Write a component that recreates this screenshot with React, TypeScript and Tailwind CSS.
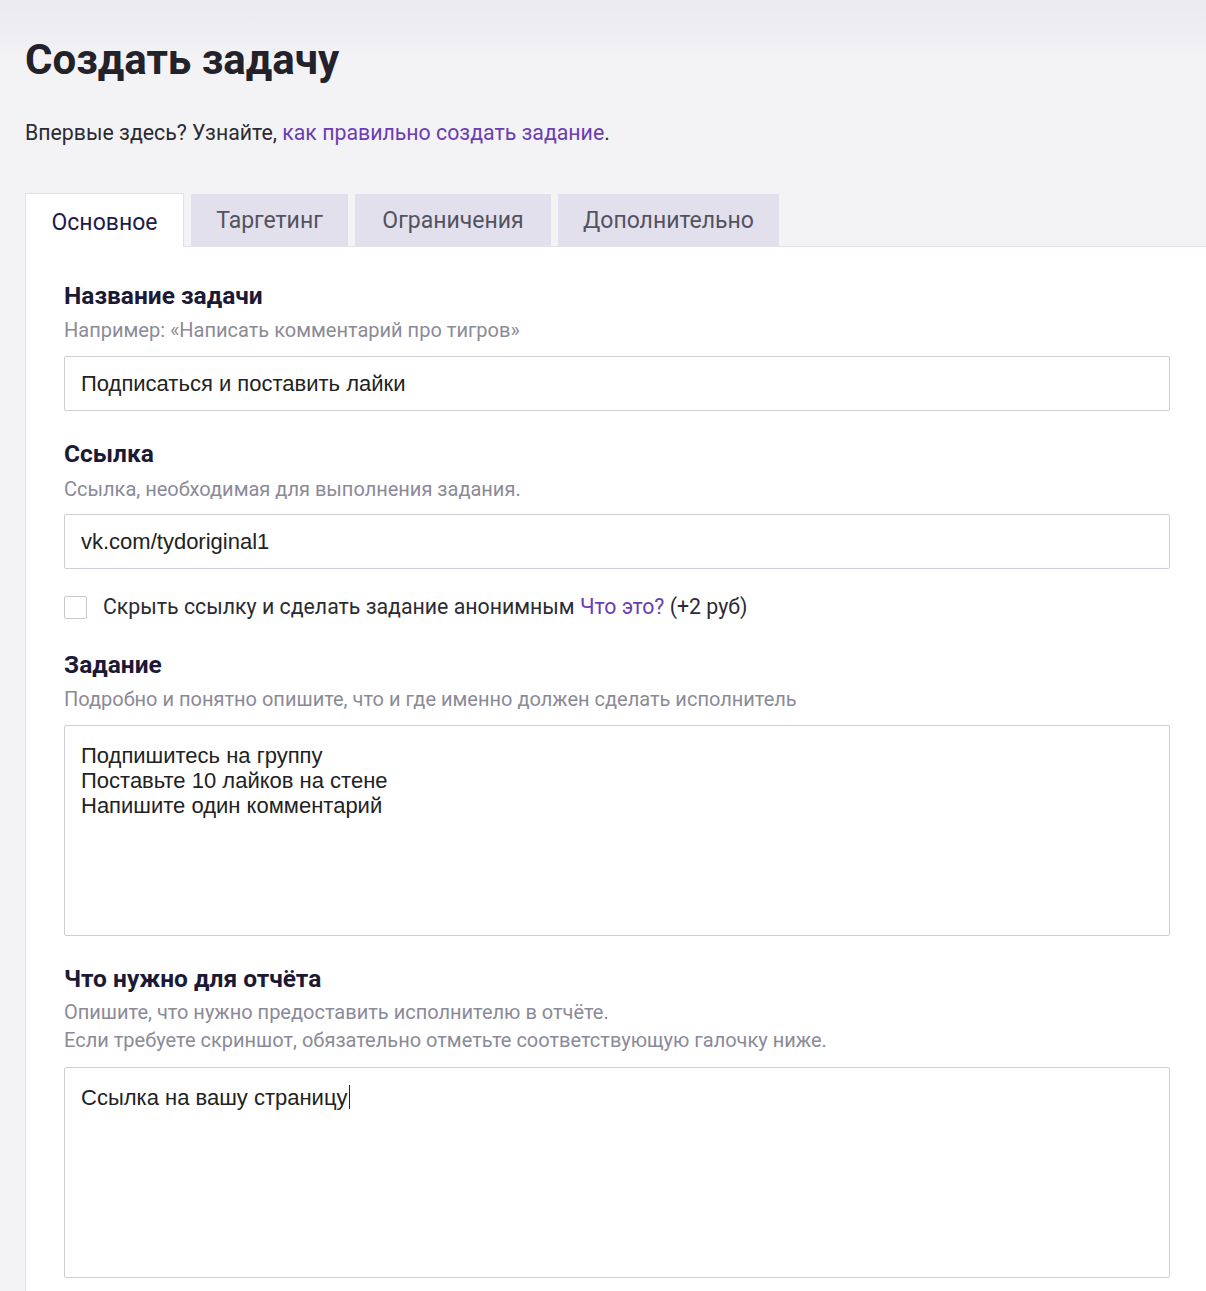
const ui = { fontFamily: 'Roboto, "Noto Sans", sans-serif' };
const val = { fontFamily: '"Liberation Sans", Arial, sans-serif' };

const tabs = [
  { title: 'Основное', w: 'w-[159px]' },
  { title: 'Таргетинг', w: 'w-[157px]' },
  { title: 'Ограничения', w: 'w-[196px]' },
  { title: 'Дополнительно', w: 'w-[221px]' },
];

function Label({ children, className = '' }: { children: React.ReactNode; className?: string }) {
  return (
    <div className={`text-[24.5px] leading-[30px] font-bold text-[#1b1a36] ${className}`}>
      {children}
    </div>
  );
}

function Hint({ children, className = '' }: { children: React.ReactNode; className?: string }) {
  return <div className={`text-[20px] leading-[28px] text-[#8b8a98] ${className}`}>{children}</div>;
}

export default function App() {
  return (
    <div
      style={ui}
      className="min-h-[1291px] w-full overflow-hidden bg-gradient-to-b from-[#e9e9ee] via-[#f3f3f6] via-[60px] to-[#f3f3f6] pl-[25px]"
    >
      <h1 className="pt-[35px] text-[42px] leading-[50px] font-bold text-[#23222a]">Создать задачу</h1>
      <p className="mt-[33px] text-[21.3px] leading-[30px] text-[#2c2b33]">
        Впервые здесь? Узнайте,{' '}
        <a href="#" className="text-[#6b3cb3]">
          как правильно создать задание
        </a>
        .
      </p>

      <div className="mt-[45px] flex items-end gap-[7px]">
        {tabs.map((t, i) =>
          i === 0 ? (
            <div
              key={t.title}
              className={`relative z-10 -mb-px flex h-[54px] items-center justify-center border border-b-0 border-[#e1e0ea] bg-white pt-[5px] text-[23px] text-[#1e1b48] ${t.w}`}
            >
              {t.title}
            </div>
          ) : (
            <div
              key={t.title}
              className={`flex h-[52px] items-center justify-center bg-[#e2e0ed] pt-[3px] text-[23px] text-[#54525e] ${t.w}`}
            >
              {t.title}
            </div>
          )
        )}
      </div>

      <div className="min-h-[1044px] border-t border-l border-[#e1e0ea] bg-white pt-[34px] pr-[36px] pb-[20px] pl-[38px]">
        <Label>Название задачи</Label>
        <Hint className="mt-[5px]">Например: «Написать комментарий про тигров»</Hint>
        <input
          readOnly
          value="Подписаться и поставить лайки"
          style={val}
          className="mt-[12px] block h-[55px] w-full rounded-[2px] border border-[#cfced6] px-[16px] text-[22px] text-[#222] outline-none"
        />

        <Label className="mt-[28px]">Ссылка</Label>
        <Hint className="mt-[6px]">Ссылка, необходимая для выполнения задания.</Hint>
        <input
          readOnly
          value="vk.com/tydoriginal1"
          style={val}
          className="mt-[11px] block h-[55px] w-full rounded-[2px] border border-[#cfced6] px-[16px] text-[22px] text-[#222] outline-none"
        />

        <label className="mt-[24px] flex h-[28px] items-center gap-[16px] text-[21.3px] text-[#2c2b33]">
          <span className="block h-[23px] w-[23px] rounded-[2px] border border-[#c9c8d0] bg-white" />
          <span>
            Скрыть ссылку и сделать задание анонимным{' '}
            <a href="#" className="text-[#6b3cb3]">
              Что это?
            </a>{' '}
            (+2 руб)
          </span>
        </label>

        <Label className="mt-[29px]">Задание</Label>
        <Hint className="mt-[5px]">Подробно и понятно опишите, что и где именно должен сделать исполнитель</Hint>
        <textarea
          readOnly
          style={val}
          value={'Подпишитесь на группу\nПоставьте 10 лайков на стене\nНапишите один комментарий'}
          className="mt-[12px] block h-[211px] w-full resize-none rounded-[2px] border border-[#cfced6] px-[16px] pt-[17px] text-[22px] leading-[25px] text-[#222] outline-none"
        />

        <Label className="mt-[28px]">Что нужно для отчёта</Label>
        <Hint className="mt-[4px]">
          Опишите, что нужно предоставить исполнителю в отчёте.
          <br />
          Если требуете скриншот, обязательно отметьте соответствующую галочку ниже.
        </Hint>
        <div
          style={val}
          className="mt-[13px] h-[211px] w-full rounded-[2px] border border-[#cfced6] px-[16px] pt-[17px] text-[22px] leading-[25px] text-[#222]"
        >
          Ссылка на вашу страницу
          <span className="ml-px inline-block h-[24px] w-px bg-[#222] align-top" />
        </div>
      </div>
    </div>
  );
}
